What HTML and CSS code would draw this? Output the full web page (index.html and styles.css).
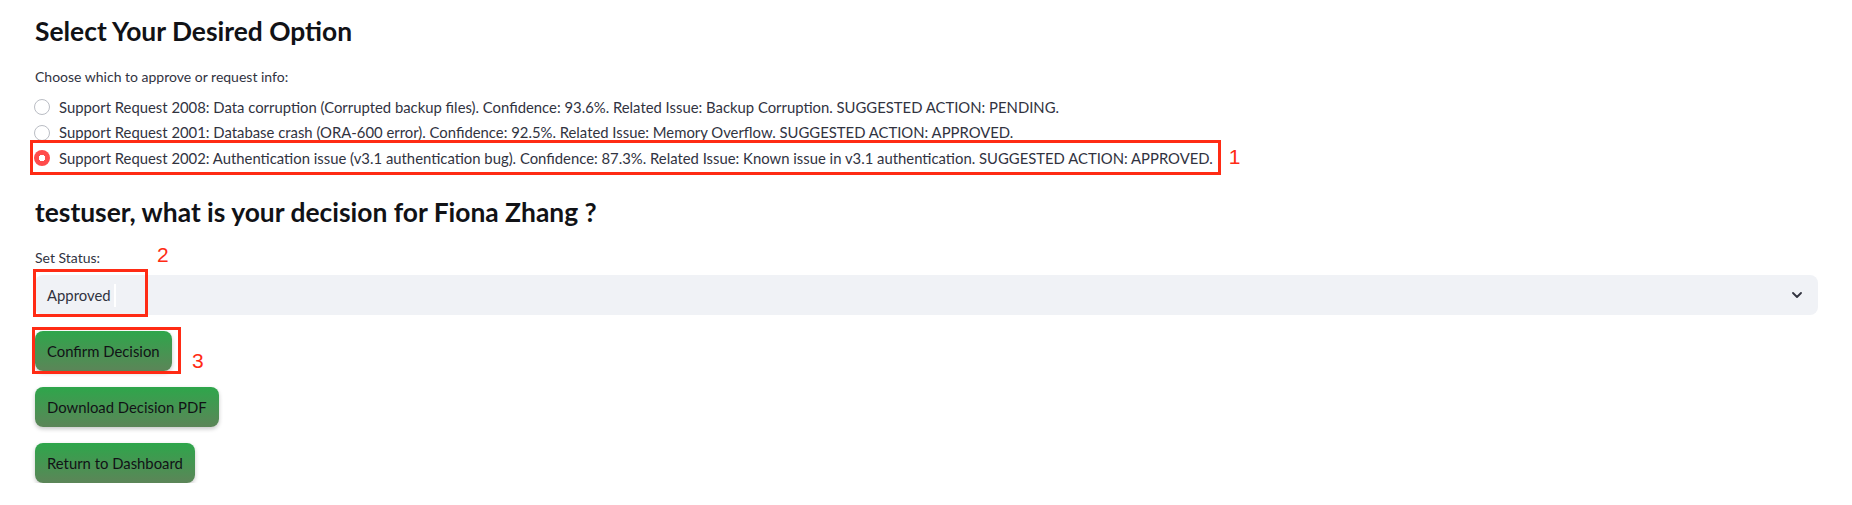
FILE: index.html
```html
<!DOCTYPE html>
<html lang="en">
<head>
<meta charset="utf-8">
<title>Select Your Desired Option</title>
<link rel="stylesheet" href="styles.css">
</head>
<body>
<main class="page">
  <h3 class="heading">Select Your Desired Option</h3>

  <section class="field">
    <div class="label">Choose which to approve or request info:</div>
    <div class="radios">
      <div class="radio"><span class="dot"></span><span class="opt">Support Request 2008: Data corruption (Corrupted backup files). Confidence: 93.6%. Related Issue: Backup Corruption. SUGGESTED ACTION: PENDING.</span></div>
      <div class="radio"><span class="dot"></span><span class="opt">Support Request 2001: Database crash (ORA-600 error). Confidence: 92.5%. Related Issue: Memory Overflow. SUGGESTED ACTION: APPROVED.</span></div>
      <div class="radio selected annotated"><span class="dot"></span><span class="opt">Support Request 2002: Authentication issue (v3.1 authentication bug). Confidence: 87.3%. Related Issue: Known issue in v3.1 authentication. SUGGESTED ACTION: APPROVED.</span><span class="mark mark-1">1</span></div>
    </div>
  </section>

  <h3 class="heading heading-2">testuser, what is your decision for Fiona Zhang ?</h3>

  <section class="field status-field">
    <div class="label">Set Status:</div>
    <span class="mark mark-2">2</span>
    <div class="select">
      <span class="select-value">Approved<span class="caret"></span></span>
      <svg class="chevron" width="10" height="6" viewBox="0 0 10 6"><path d="M1 1l4 4 4-4" fill="none" stroke="#31333f" stroke-width="1.8" stroke-linecap="round" stroke-linejoin="round"/></svg>
      <span class="annot-box box-2"></span>
    </div>
  </section>

  <div class="buttons">
    <div class="btn-wrap">
      <button class="btn">Confirm Decision</button>
      <span class="annot-box box-3"></span>
      <span class="mark mark-3">3</span>
    </div>
    <div class="btn-wrap"><button class="btn">Download Decision PDF</button></div>
    <div class="btn-wrap"><button class="btn">Return to Dashboard</button></div>
  </div>
</main>
</body>
</html>
```

FILE: styles.css
```css
* { box-sizing: border-box; }

body {
  margin: 0;
  background: #ffffff;
  font-family: Lato, "Noto Sans", sans-serif;
  color: #31333f;
}

.page {
  display: flex;
  flex-direction: column;
  align-items: stretch;
  padding: 14px 34px 0 35px;
}

.heading {
  margin: 0;
  font-weight: 700;
  font-size: 26.4px;
  line-height: 34px;
  color: #111216;
}

.heading-2 { margin-top: 24px; }

.field { position: relative; }

.label {
  margin-top: 19px;
  font-size: 14px;
  line-height: 20px;
  color: #31333f;
}

.status-field .label { margin-top: 19px; }

.radios {
  margin-top: 7.5px;
  display: flex;
  flex-direction: column;
  align-items: flex-start;
}

.radio {
  position: relative;
  display: flex;
  align-items: center;
  height: 25.5px;
  gap: 9px;
  margin-left: -1px;
  font-size: 14.85px;
  line-height: 25px;
  color: #31333f;
  white-space: nowrap;
}

.dot {
  width: 16px;
  height: 16px;
  border-radius: 50%;
  border: 1px solid #babdc4;
  background: #fff;
  flex: none;
}

.radio.selected .dot {
  border: none;
  background: radial-gradient(circle, #ffffff 0 3px, #ff4b4b 3.5px);
}

.annotated::after {
  content: "";
  position: absolute;
  left: -4px;
  right: -8px;
  top: -5.5px;
  bottom: -4px;
  border: 3px solid #ff2b14;
}

.mark {
  position: absolute;
  font-family: "Liberation Sans", Arial, sans-serif;
  font-size: 21px;
  line-height: 21px;
  color: #ff2b14;
}

.mark-1 { left: calc(100% + 16px); top: 0; }
.mark-2 { left: 122px; top: 15px; }
.mark-3 { left: 157px; top: 19px; }

.select {
  position: relative;
  margin-top: 7px;
  height: 40px;
  border-radius: 8px;
  background: #f0f2f6;
  display: flex;
  align-items: center;
  justify-content: space-between;
  padding: 0 16px 0 12px;
}

.select-value {
  display: flex;
  align-items: center;
  font-size: 14.85px;
  color: #31333f;
}

.caret {
  display: inline-block;
  width: 2px;
  height: 23px;
  margin-left: 3px;
  background: #ffffff;
}

.chevron { display: block; }

.annot-box {
  position: absolute;
  border: 3px solid #ff2b14;
  pointer-events: none;
}

.box-2 { left: -2px; top: -6px; width: 115px; height: 48px; }
.box-3 { left: -3px; top: -4px; right: -9px; bottom: -3px; }

.buttons {
  margin-top: 16px;
  display: flex;
  flex-direction: column;
  align-items: flex-start;
  gap: 16px;
}

.btn-wrap { position: relative; }

.btn {
  display: block;
  height: 40px;
  padding: 0 12px;
  border: none;
  border-radius: 8px;
  background: linear-gradient(to bottom, #2ea64b, #5c8558);
  box-shadow: 0 2px 4px rgba(0, 0, 0, 0.22);
  font-family: Lato, "Noto Sans", sans-serif;
  font-size: 14.85px;
  color: #111216;
  cursor: pointer;
}
```
